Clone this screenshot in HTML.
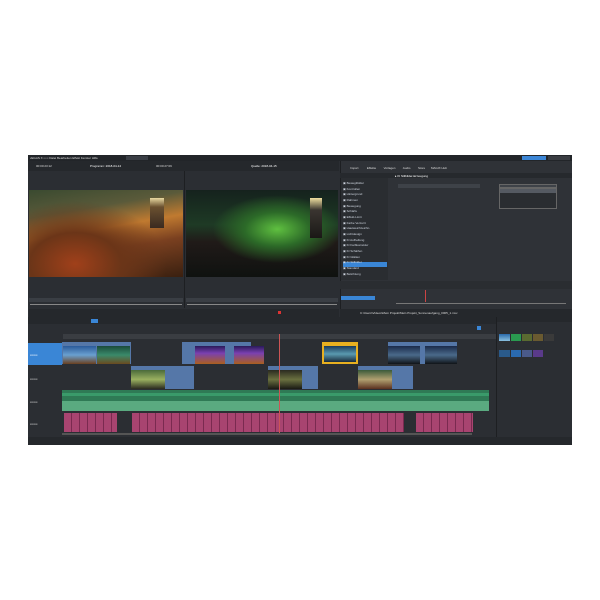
<!DOCTYPE html>
<html><head><style>
*{margin:0;padding:0;box-sizing:border-box}
body{width:600px;height:600px;background:#fff;position:relative;overflow:hidden;font-family:"Liberation Sans",sans-serif;font-size:3px;color:#ccc}
div{position:absolute}
.app{left:28px;top:155px;width:544px;height:290px;background:#2b2e33}
.t{white-space:nowrap;font-size:3px;color:#ddd}
.pk{background:repeating-linear-gradient(90deg,#a84470 0,#a84470 7px,#7a2a50 7px,#7a2a50 8px)}
</style></head><body>
<div class="app"></div>
<div style="left:28px;top:155px;width:544px;height:6px;background:#222529"></div>
<div class="t" style="left:30px;top:156px">vEGAS X ▪ ▪ ▪ Datei Bearbeiten Effekt Fenster Hilfe</div>
<div style="left:126px;top:156px;width:22px;height:4px;background:#3a3e45"></div>
<div style="left:522px;top:156px;width:24px;height:4px;background:#3c86d6"></div>
<div style="left:548px;top:156px;width:22px;height:4px;background:#3a3d42"></div>
<div style="left:28px;top:161px;width:311px;height:10px;background:#25282c"></div>
<div class="t" style="left:36px;top:164px">00:00:23:12</div>
<div class="t" style="left:90px;top:164px;color:#fff">Programm: 2018-04-14</div>
<div class="t" style="left:156px;top:164px">00:00:27:09</div>
<div class="t" style="left:251px;top:164px;color:#fff">Quelle: 2018-04-15</div>
<div style="left:184px;top:171px;width:1px;height:137px;background:#1d1f22"></div>
<div style="left:29px;top:190px;width:154px;height:87px;background:radial-gradient(ellipse at 30% 85%,#a0401a 0%,#6b3518 30%,transparent 60%),linear-gradient(170deg,#3a4a30 0%,#5a5a3a 25%,#c07a30 45%,#7a4020 65%,#3a2010 100%)"></div>
<div style="left:150px;top:198px;width:14px;height:30px;background:linear-gradient(#e8d8a0,#6a5030 30%,#3a2a20)"></div>
<div style="left:186px;top:190px;width:152px;height:87px;background:radial-gradient(ellipse at 60% 45%,#5fc040 0%,#2c6a28 25%,transparent 50%),linear-gradient(180deg,#15221d 0%,#1e3a25 40%,#201a18 60%,#0f1210 100%)"></div>
<div style="left:310px;top:198px;width:12px;height:40px;background:linear-gradient(#f0e0a0,#3a3530 30%,#1a1816)"></div>
<div style="left:29px;top:298px;width:154px;height:4px;background:#3a3e44"></div>
<div style="left:186px;top:298px;width:152px;height:4px;background:#3a3e44"></div>
<div style="left:30px;top:304px;width:152px;height:1px;background:#888"></div>
<div style="left:187px;top:304px;width:150px;height:1px;background:#888"></div>
<div style="left:29px;top:309px;width:310px;height:8px;background:#25282c"></div>
<div style="left:278px;top:311px;width:3px;height:3px;background:#d33"></div>
<div style="left:340px;top:161px;width:232px;height:148px;background:#2f3237;border-left:1px solid #1d1f22"></div>
<div class="t" style="left:350px;top:166px">Import &nbsp;&nbsp;&nbsp;&nbsp;&nbsp;&nbsp;&nbsp;&nbsp; Effekte &nbsp;&nbsp;&nbsp;&nbsp;&nbsp;&nbsp;&nbsp; Vorlagen &nbsp;&nbsp;&nbsp;&nbsp;&nbsp;&nbsp;&nbsp; Audio &nbsp;&nbsp;&nbsp;&nbsp;&nbsp;&nbsp;&nbsp; Store &nbsp;&nbsp;&nbsp;&nbsp;&nbsp; MAGIX Hub</div>
<div style="left:340px;top:173px;width:232px;height:5px;background:#26292d"></div>
<div class="t" style="left:395px;top:174px;color:#fff">▸ KI Stilbilder-Erzeugung</div>
<div style="left:341px;top:178px;width:47px;height:102px;background:#2a2d31"></div>
<div style="left:343px;top:262px;width:44px;height:5px;background:#3a86d6"></div>
<div class="t" style="left:343px;top:181px;line-height:5.65px;color:#cfd6e0">▣ Bewegtbilder<br>▣ Kontrollen<br>▣ Hintergrund<br>▣ Rahmen<br>▣ Bewegung<br>▣ Schärfe<br>▣ Effekt-Limit<br>▣ Farbe Verzerrt<br>▣ Hautweichzeichn.<br>▣ Lichtdesign<br>▣ KI Aufhellung<br>▣ KI Farbkorrektur<br>▣ KI Schärfen<br>▣ KI Glätten<br>▣ KI Stilbilder<br>▣ Standard<br>▣ Belichtung</div>
<div style="left:398px;top:184px;width:82px;height:4px;background:#3e4248"></div>
<div style="left:499px;top:184px;width:58px;height:4px;background:#3e4248;border:1px solid #666"></div>
<div style="left:499px;top:188px;width:58px;height:21px;background:#2a2d31;border:1px solid #666"></div>
<div style="left:500px;top:189px;width:56px;height:4px;background:#555a62"></div>
<div style="left:340px;top:281px;width:232px;height:8px;background:#2a2d31"></div>
<div style="left:341px;top:296px;width:34px;height:4px;background:#3a86d6"></div>
<div style="left:425px;top:290px;width:1px;height:12px;background:#c44"></div>
<div style="left:396px;top:303px;width:170px;height:1px;background:#777"></div>
<div style="left:340px;top:309px;width:232px;height:8px;background:#25282c"></div>
<div class="t" style="left:360px;top:311px">C:\Users\Videos\Mein Projekt\Mein Projekt_Sonnenaufgang_0005_1.mxv</div>
<div style="left:28px;top:317px;width:468px;height:7px;background:#25282c"></div>
<div style="left:28px;top:324px;width:468px;height:6px;background:#2b2e33"></div>
<div style="left:91px;top:319px;width:7px;height:4px;background:#3a86d6"></div>
<div style="left:63px;top:334px;width:434px;height:5px;background:#3a3d42"></div>
<div style="left:477px;top:326px;width:4px;height:4px;background:#3a86d6"></div>
<div style="left:28px;top:343px;width:34px;height:22px;background:#3a86d6"></div>
<div class="t" style="left:30px;top:353px;color:#fff">▪▪▪▪▪▪▪</div>
<div class="t" style="left:30px;top:377px">▪▪▪▪▪▪▪</div>
<div class="t" style="left:30px;top:400px">▪▪▪▪▪▪▪</div>
<div class="t" style="left:30px;top:422px">▪▪▪▪▪▪▪</div>
<div style="left:62px;top:342px;width:69px;height:22px;background:#5577a8"></div>
<div style="left:63px;top:346px;width:33px;height:18px;background:linear-gradient(#2a5a9a,#6aa0d0 50%,#6a4020)"></div>
<div style="left:97px;top:346px;width:33px;height:18px;background:linear-gradient(#1a4a3a,#3a8a6a 50%,#6a4a20)"></div>
<div style="left:182px;top:342px;width:69px;height:22px;background:#5577a8"></div>
<div style="left:195px;top:346px;width:30px;height:18px;background:linear-gradient(#2a1a5a,#7a40b0 40%,#aa6020)"></div>
<div style="left:234px;top:346px;width:30px;height:18px;background:linear-gradient(#2a1a5a,#7a40b0 40%,#aa6020)"></div>
<div style="left:322px;top:342px;width:36px;height:22px;background:#e8b020"></div>
<div style="left:324px;top:346px;width:32px;height:16px;background:linear-gradient(#1a3a5a,#5a9ab0 50%,#1a2a3a)"></div>
<div style="left:388px;top:342px;width:69px;height:22px;background:#5577a8"></div>
<div style="left:388px;top:346px;width:32px;height:18px;background:linear-gradient(#1a2a4a,#4a6a8a 50%,#101418)"></div>
<div style="left:425px;top:346px;width:32px;height:18px;background:linear-gradient(#1a2a4a,#4a6a8a 50%,#101418)"></div>
<div style="left:131px;top:366px;width:63px;height:23px;background:#5577a8"></div>
<div style="left:131px;top:370px;width:34px;height:19px;background:linear-gradient(#4a6a3a,#9ab060 50%,#2a2a20)"></div>
<div style="left:268px;top:366px;width:50px;height:23px;background:#5577a8"></div>
<div style="left:268px;top:370px;width:34px;height:19px;background:linear-gradient(#2a2a20,#6a7040 50%,#1a1a14)"></div>
<div style="left:358px;top:366px;width:55px;height:23px;background:#5577a8"></div>
<div style="left:358px;top:370px;width:34px;height:19px;background:linear-gradient(#3a5a3a,#b0a070 50%,#5a3020)"></div>
<div style="left:62px;top:390px;width:427px;height:21px;background:#2f7a55"></div>
<div style="left:62px;top:401px;width:427px;height:10px;background:#5aaa80"></div>
<div style="left:62px;top:393px;width:427px;height:3px;background:#3a9a6a"></div>
<div class="pk" style="left:64px;top:413px;width:53px;height:19px"></div>
<div class="pk" style="left:132px;top:413px;width:272px;height:19px"></div>
<div class="pk" style="left:416px;top:413px;width:57px;height:19px"></div>
<div style="left:279px;top:334px;width:1px;height:100px;background:#c55"></div>
<div style="left:62px;top:433px;width:410px;height:2px;background:#555"></div>
<div style="left:496px;top:317px;width:76px;height:120px;background:#2b2e33;border-left:1px solid #1d1f22"></div>
<div style="left:497px;top:317px;width:75px;height:5px;background:#25282c"></div>
<div style="left:499px;top:334px;width:11px;height:7px;background:linear-gradient(#2a6aaa,#8ac0e0)"></div>
<div style="left:511px;top:334px;width:10px;height:7px;background:#2a9a50"></div>
<div style="left:522px;top:334px;width:10px;height:7px;background:#5a6a30"></div>
<div style="left:533px;top:334px;width:10px;height:7px;background:#6a5a30"></div>
<div style="left:544px;top:334px;width:10px;height:7px;background:#3a3a3a"></div>
<div style="left:499px;top:350px;width:11px;height:7px;background:#2a5a8a"></div>
<div style="left:511px;top:350px;width:10px;height:7px;background:#2a6ab0"></div>
<div style="left:522px;top:350px;width:10px;height:7px;background:#4a5a8a"></div>
<div style="left:533px;top:350px;width:10px;height:7px;background:#5a3a8a"></div>
<div style="left:28px;top:437px;width:544px;height:8px;background:#25282c"></div>
</body></html>
